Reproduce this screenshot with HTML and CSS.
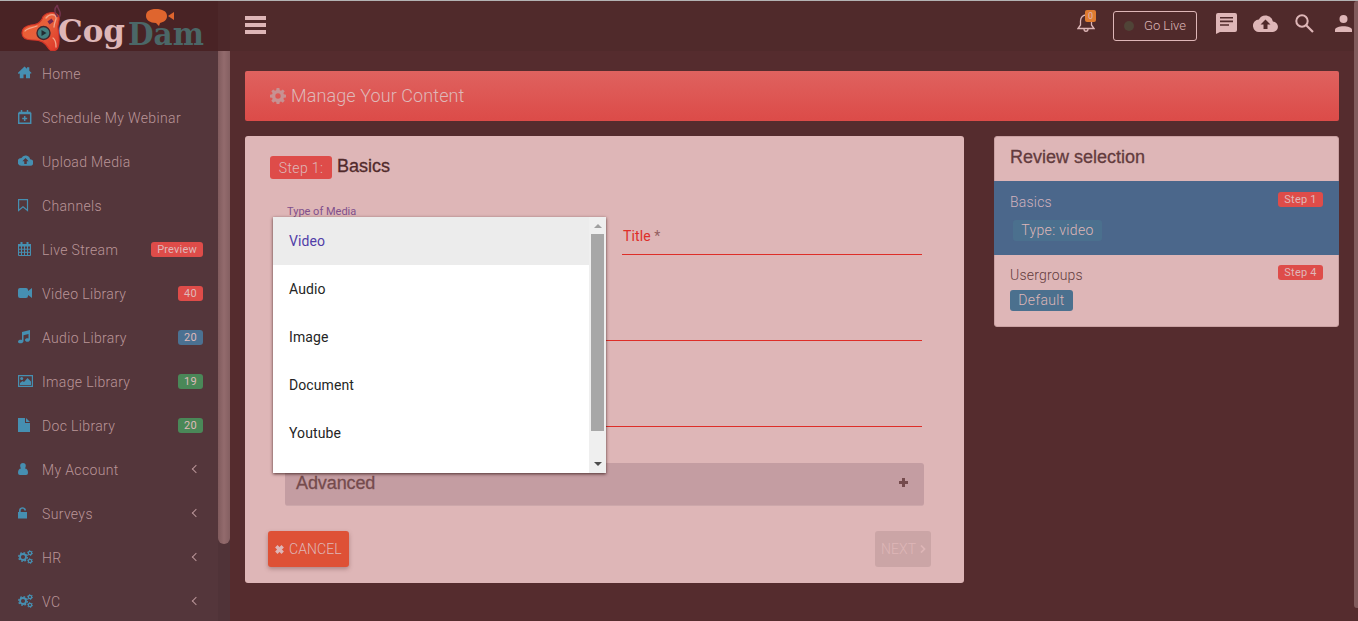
FILE: index.html
```html
<!DOCTYPE html>
<html lang="en">
<head>
<meta charset="utf-8">
<title>CogDam - Manage Your Content</title>
<link rel="stylesheet" href="styles.css">
</head>
<body>
<svg class="defs" aria-hidden="true">
  <symbol id="gear" viewBox="0 0 16 16"><path fill-rule="evenodd" d="M6.600 0h2.800l.4 2.200 1.200.5L12.800 1.400l1.900 1.900-1.300 1.800.5 1.200 2.100.4v2.700l-2.100.4-.5 1.200 1.300 1.800-1.900 1.900-1.800-1.300-1.200.5-.4 2.100H6.600l-.4-2.100-1.200-.5-1.800 1.300-1.900-1.900 1.300-1.800-.5-1.200L0 9.400V6.700l2.100-.4.500-1.200-1.300-1.800 1.900-1.900L5 2.700l1.200-.5zM8 5.300a2.700 2.700 0 1 0 0 5.400 2.700 2.700 0 0 0 0-5.400z"/></symbol>
  <symbol id="cloud" viewBox="0 0 24 17"><path fill-rule="evenodd" d="M19.400 6.500A7.500 7.500 0 0 0 5.400 4.500 6 6 0 0 0 6 17h13a5 5 0 0 0 .4-10.500zM14 9.500V14h-4V9.500H7l5-5 5 5z"/></symbol>
  <symbol id="gears" viewBox="0 0 15 14"><g fill="none" stroke="currentColor"><circle cx="5" cy="7" r="3" stroke-width="1.800"/><circle cx="5" cy="7" r="4.300" stroke-width="1.400" stroke-dasharray="1.700 1.677"/><circle cx="12" cy="3" r="1.700" stroke-width="1.300"/><circle cx="12" cy="3" r="2.600" stroke-width=".9" stroke-dasharray="1.200 1.522"/><circle cx="12" cy="11" r="1.700" stroke-width="1.300"/><circle cx="12" cy="11" r="2.600" stroke-width=".9" stroke-dasharray="1.200 1.522"/></g></symbol>
</svg>
<div class="app">
  <aside class="sidebar">
    <div class="brand">
      <svg width="218" height="51" viewBox="0 0 218 51">
        <defs><linearGradient id="flame" x1="0" y1="0" x2="1" y2="1"><stop offset="0" stop-color="#ef5a2c"/><stop offset=".5" stop-color="#e8603c"/><stop offset="1" stop-color="#dc3427"/></linearGradient></defs>
        <path d="M42 19C44 12 56 10 59 17c1 4-2 8-1 12 1 6 2 13 0 18-1 4-7 5-9 2-4-7-8-9-16-9-5 0-11-1-11-7 0-5 4-7 9-8 5 0 9-2 11-6z" fill="url(#flame)" stroke="#d03428" stroke-width="1.200"/>
        <path d="M46 18c4-5 11-4 10 1-1 3-2 5-2 8M25 31c2-3 7-3 12-5M53 38c3 2 3 6 3 9" fill="none" stroke="#f2a58c" stroke-width="1.300" stroke-linecap="round"/>
        <path d="M57.500 5c-4 4-3 7 0 12M57.500 5c-1 4 5 6 2 12" fill="none" stroke="#74344f" stroke-width="1.500"/><path d="M52.500 20l-4 3" stroke="#74264e" stroke-width="3.500"/>
        <circle cx="43.500" cy="33" r="7.200" fill="#41272e"/><circle cx="43.500" cy="33" r="5.800" fill="#438080"/><path d="M41.500 30l5 3-5 3z" fill="#222b31"/>
        <text class="logo-cog" x="58" y="42" textLength="67" lengthAdjust="spacingAndGlyphs">Cog</text>
        <text class="logo-dam" x="128" y="45" textLength="76" lengthAdjust="spacingAndGlyphs">Dam</text>
        <path d="M156 9c6 0 11 2 11 7 0 4-3 6-7 7l-1 3-3-3c-6 0-10-3-10-7 0-5 4-7 10-7zM168 16l6-4v8z" fill="#df652e"/>
      </svg>
    </div>
    <div class="side-body">
      <nav class="menu">
        <a><svg viewBox="0 0 15 14"><path d="M-.3 7L6.500.6 9 2.800V1.200h2.300v3.500L13.600 7l-.8.8L12 7.200v5H8V8.500H5.500v3.700H1.800v-5l-.9.700z"/></svg><span>Home</span></a>
        <a><svg viewBox="0 0 15 14"><path d="M.7 3.500h12v9.800H.7zM.7 2.500h12M3.500 0v3M9.500 0v3M6.700 6v5M4.200 8.500h5" fill="none" stroke="currentColor" stroke-width="1.500"/></svg><span>Schedule My Webinar</span></a>
        <a><svg viewBox="0 0 15 14"><use href="#cloud" y="1" width="15" height="11"/></svg><span>Upload Media</span></a>
        <a><svg viewBox="0 0 15 14"><path d="M.6 1.600h8.900v10.900L5 8.800.6 12.500z" fill="none" stroke="currentColor" stroke-width="1.200"/></svg><span>Channels</span></a>
        <a><svg viewBox="0 0 15 14"><path d="M.5 4v9.500h12V4M3.500 4v9.500M6.500 4v9.500M9.500 4v9.500M.5 7.200h12M.5 10.300h12" fill="none" stroke="currentColor"/><path d="M0 2h13v2.500H0zM2.500 0h2v3h-2zM8.500 0h2v3h-2z"/></svg><span>Live Stream</span><b class="badge red">Preview</b></a>
        <a><svg viewBox="0 0 15 14"><path d="M2 2h6q2 0 2 2v1l4-3v10l-4-3v1q0 2-2 2H2q-2 0-2-2V4q0-2 2-2z"/></svg><span>Video Library</span><b class="badge red">40</b></a>
        <a><svg viewBox="0 0 15 14"><path d="M4 2l8-2v9.500c0 3-5 3-5 .5 0-1.500 2-2 3.500-1.500V4L5.500 5.300V11c0 3-5.500 3-5.500.7 0-1.700 2.500-2.200 4-1.700z"/></svg><span>Audio Library</span><b class="badge blue">20</b></a>
        <a><svg viewBox="0 0 15 14"><path d="M.6 1.600h13.800v10.800H.6z" fill="none" stroke="currentColor" stroke-width="1.200"/><circle cx="3.700" cy="4.500" r="1.500"/><path d="M2 11V9l2.500-2L6 8l3.500-4L13 7.500V11z"/></svg><span>Image Library</span><b class="badge green">19</b></a>
        <a><svg viewBox="0 0 15 14"><path d="M0 0h7v5h5v9H0zM8 0l4 4H8z"/></svg><span>Doc Library</span><b class="badge green">20</b></a>
        <a><svg viewBox="0 0 15 14"><path d="M5 1C2 1 1.500 4 3 6.500 1 6.500 0 8 0 11q0 2 2 2h6q2 0 2-2c0-3-1-4.500-3-4.500C8.500 4 8 1 5 1z"/></svg><span>My Account</span><i class="chev"></i></a>
        <a><svg viewBox="0 0 15 14"><path d="M0 6h1V4.500C1 0 8 0 8 4.500H6.300C6.300 2 2.700 2 2.700 4.500V6H9v6.500H0z"/></svg><span>Surveys</span><i class="chev"></i></a>
        <a><svg><use href="#gears"/></svg><span>HR</span><i class="chev"></i></a>
        <a><svg><use href="#gears"/></svg><span>VC</span><i class="chev"></i></a>
      </nav>
      <div class="side-scroll"><div></div></div>
    </div>
  </aside>
  <div class="page">
    <header class="topbar">
      <div class="burger"><i></i><i></i><i></i></div>
      <div class="bell"><svg width="18" height="20" viewBox="0 0 18 20"><path d="M1 16.500h16L14.500 13V9C14.500 1 3.500 1 3.500 9v4zM9 3V1M7 17c0 3 4 3 4 0" fill="none" stroke="currentColor" stroke-width="1.300"/></svg><b>0</b></div>
      <button class="live"><i></i>Go Live</button>
      <svg class="chat" width="21" height="21" viewBox="0 0 21 21"><path fill-rule="evenodd" d="M2 0h17q2 0 2 2v15q0 2-2 2H4l-4 2V2q0-2 2-2zm2 4v1.600h13V4zm0 3.600v1.600h13V7.600zm0 3.600v1.600h9v-1.600z"/></svg>
      <svg class="up" width="25" height="17"><use href="#cloud"/></svg>
      <svg class="search" width="19" height="19" viewBox="0 0 19 19"><circle cx="7" cy="7" r="5.700" fill="none" stroke="currentColor" stroke-width="2"/><path d="M11 11l7 7" stroke="currentColor" stroke-width="2.200"/></svg>
      <svg class="user" width="17" height="17" viewBox="0 0 17 17"><circle cx="8.500" cy="4" r="4"/><path d="M0 17v-2c0-5 17-5 17 0v2z"/></svg>
    </header>
    <main>
      <div class="title"><svg width="16" height="16"><use href="#gear"/></svg><h1>Manage Your Content</h1></div>
      <div class="columns">
        <section class="card form">
          <div class="step-head"><b>Step 1:</b><h2>Basics</h2></div>
          <div class="fields">
            <div class="media">
              <label>Type of Media</label>
              <div class="dropdown">
                <ul><li class="on">Video</li><li>Audio</li><li>Image</li><li>Document</li><li>Youtube</li></ul>
                <div class="dd-scroll"><i class="tri-up"></i><div class="thumb"></div><i class="tri-down"></i></div>
              </div>
            </div>
            <div class="field">Title <em>*</em></div>
            <div class="line"></div>
            <div class="line"></div>
          </div>
          <div class="advanced"><span>Advanced</span><svg width="9" height="9" viewBox="0 0 9 9"><path d="M3 0h3v3h3v3H6v3H3V6H0V3h3z"/></svg></div>
          <div class="actions">
            <button class="cancel"><svg width="9" height="9" viewBox="0 0 9 9"><path d="M1.300 1.300l6.400 6.400m0-6.400L1.300 7.700" stroke="currentColor" stroke-width="3.400"/></svg><span>CANCEL</span></button>
            <button class="next"><span>NEXT</span><svg width="6" height="8" viewBox="0 0 6 8"><path d="M1 .5L4.500 4 1 7.500" fill="none" stroke="currentColor" stroke-width="1.700"/></svg></button>
          </div>
        </section>
        <section class="card review">
          <h2>Review selection</h2>
          <div class="row active"><div><p>Basics</p><b class="tag inset">Type: video</b></div><b class="badge red">Step 1</b></div>
          <div class="row"><div><p>Usergroups</p><b class="tag">Default</b></div><b class="badge red">Step 4</b></div>
        </section>
      </div>
    </main>
  </div>
  <div class="page-scroll"></div>
</div>
</body>
</html>
```
FILE: styles.css
```css
* { box-sizing: border-box; }
body { margin: 0; overflow: hidden; font: 300 14px/20px Roboto, "Liberation Sans", sans-serif; letter-spacing: .35px; color: #512a2c; }
h1, h2, p, ul { margin: 0; padding: 0; }
svg { display: block; flex: none; fill: currentColor; }
b { font-weight: 400; }
button { font: inherit; letter-spacing: inherit; }
.defs { position: absolute; width: 0; height: 0; }
.app { position: relative; display: flex; width: 1358px; height: 621px; background: #552c2e; border-top: 1px solid #b3b3b3; }

.sidebar { width: 230px; flex: none; display: flex; flex-direction: column; }
.brand { height: 50px; background: linear-gradient(to right, #492325 218px, #4d282a 218px); }
.brand svg { margin-top: -1px; overflow: visible; }
.logo-cog { font: bold 31px "DejaVu Serif", serif; letter-spacing: 0; fill: #deb6b7; }
.logo-dam { font: bold 31px "DejaVu Serif", serif; letter-spacing: 0; fill: #4b6767; }
.side-body { display: flex; flex: 1; min-height: 0; background: #54363b; }
.menu { width: 218px; overflow: hidden; color: #ba9598; }
.menu a { display: flex; align-items: center; height: 44px; padding: 0 15px 0 18px; }
.menu svg { width: 15px; height: 14px; margin-right: 9px; color: #468fb1; }
.menu span { flex: 1; padding-top: 1px; }
.badge { display: block; height: 15px; padding: 0 6px; border-radius: 3px; font-size: 11px; line-height: 15px; letter-spacing: .2px; color: #dfb8b9; }
.menu .badge { min-width: 25px; text-align: center; }
.red { background: #de4c49; }
.blue { background: #4b7192; }
.green { background: #4a8858; }
.chev { width: 5px; height: 5px; margin-right: 4px; border: solid #ba9598; border-width: 0 0 1.5px 1.5px; transform: rotate(45deg); }
.chev { width: 6px; height: 6px; }
.side-scroll { width: 12px; background: #503338; }
.side-scroll div { height: 493px; border-radius: 0 0 6px 6px; background: linear-gradient(to right, #805b5d, #936b6d 50%, #845f61); }

.page { width: 1124px; }
.topbar { display: flex; align-items: flex-start; height: 50px; padding: 0 2px 0 15px; background: #502a2b; color: #deb6b7; }
.burger { display: grid; gap: 3px; margin: 15px auto 0 0; }
.burger i { width: 21px; height: 4px; background: #deb6b7; }
.bell { position: relative; margin: 11px 16px 0 0; width: 20px; }
.bell b { position: absolute; left: 8px; top: -2px; width: 11px; height: 12px; border-radius: 2px; background: #df7b31; font-size: 9px; line-height: 12px; text-align: center; letter-spacing: 0; }
.live { display: flex; align-items: center; gap: 10px; width: 84px; height: 30px; margin: 10px 19px 0 0; padding: 0 0 0 10px; border: 1px solid #deb6b7; border-radius: 3px; background: none; color: inherit; font-size: 13px; letter-spacing: 0; }
.live i { width: 10px; height: 10px; border-radius: 50%; background: #504437; }
.chat { margin: 12px 16px 0 0; }
.up { margin: 14px 17px 0 0; }
.search { margin: 13px 21px 0 0; }
.user { margin-top: 14px; }
.page-scroll { width: 4px; height: 607px; border-radius: 3px 0 0 3px; background: #805b5c; }

main { padding: 20px 15px 0; }
.title { display: flex; align-items: center; gap: 5px; height: 50px; padding-left: 25px; border-radius: 2px; background: linear-gradient(#df625f, #dc4b48); color: #c79192; }
.title h1 { font-size: 18px; font-weight: 300; letter-spacing: .1px; color: #dfb8b9; }
.columns { display: flex; align-items: flex-start; gap: 30px; margin-top: 15px; }
.card { border-radius: 3px; background: #deb6b7; }
.form { width: 719px; height: 447px; padding: 20px 33px 0 23px; }
.step-head { display: flex; align-items: flex-start; gap: 5px; height: 23px; padding-left: 2px; }
.step-head b { width: 62px; height: 23px; border-radius: 3px; background: #de4c49; color: #dfb8b9; text-align: center; line-height: 24px; font-weight: 300; }
h2 { font: 400 18px/20px "Liberation Sans", Arial, sans-serif; letter-spacing: 0; -webkit-text-stroke: .3px; }
.fields { display: grid; grid-template: 76px 86px 86px / 354px 300px; height: 248px; }
.media { position: relative; padding: 25px 0 0 19px; }
.media label { display: block; font: 400 11px/15px Roboto, sans-serif; letter-spacing: 0; color: #80508d; }
.dropdown { position: absolute; left: 5px; top: 38px; z-index: 2; display: flex; width: 333px; height: 256px; background: #fff; box-shadow: 0 1px 3px rgba(40, 10, 10, .75); }
.dropdown ul { flex: 1; overflow: hidden; list-style: none; color: #252525; font-weight: 400; letter-spacing: .1px; }
.dropdown li { height: 48px; padding-left: 16px; line-height: 49px; }
.dropdown .on { background: #ececec; color: #513da8; }
.dd-scroll { display: flex; flex-direction: column; align-items: center; width: 17px; padding: 7px 0; background: #efefef; }
.thumb { width: 13px; height: 197px; margin: 6px 0 auto; background: #a7a7a7; }
.tri-up, .tri-down { border: solid transparent; border-width: 0 4px; }
.tri-up { border-bottom: 4px solid #a0a0a0; }
.tri-down { border-top: 4px solid #4c4c4c; }
.field { padding: 47px 0 0 1px; border-bottom: 1px solid #de2e28; color: #de2e28; font-weight: 400; letter-spacing: .1px; }
.field em { font-style: normal; color: #946061; }
.line { grid-column: 1 / 3; border-bottom: 1px solid #de2e28; margin-left: 19px; }
.advanced { display: flex; justify-content: space-between; height: 43px; margin: 36px 7px 0 17px; padding: 10px 16px 0 11px; border-bottom: 1px solid #cca7aa; border-radius: 3px; background: #c49da2; color: #754b4d; font: 400 18px/20px "Liberation Sans", Arial, sans-serif; letter-spacing: -.1px; -webkit-text-stroke: .3px; }
.advanced svg { margin-top: 5px; }
.actions { display: flex; justify-content: space-between; margin-top: 25px; }
.actions button { display: flex; align-items: center; height: 36px; border: 0; border-radius: 3px; color: #deb6b7; letter-spacing: .1px; }
.actions .cancel { width: 81px; padding: 0 0 0 7px; gap: 5px; background: #de5136; box-shadow: 0 2px 4px rgba(90, 40, 40, .35); }
.actions .next { width: 56px; padding: 0 0 0 6px; gap: 4px; background: #cba5a6; }
.review { width: 345px; height: 191px; border: 1px solid #c9a0a1; }
.review h2 { height: 44px; padding: 10px 15px 0; color: #633b3d; }
.row { display: flex; justify-content: space-between; align-items: flex-start; height: 72px; margin: 0 -1px; padding: 10px 16px; }
.row p { color: #633b3d; letter-spacing: .2px; }
.row .badge { width: 45px; padding: 0; text-align: center; }
.tag { display: block; width: 63px; height: 21px; margin-top: 5px; border-radius: 3px; background: #4b708e; color: #deb6b7; font-weight: 300; line-height: 21px; text-align: center; }
.active { height: 74px; padding-top: 11px; background: #4b678b; }
.active p { color: #cfb1bd; }
.inset { width: 89px; margin: 8px 0 0 3px; }
```
